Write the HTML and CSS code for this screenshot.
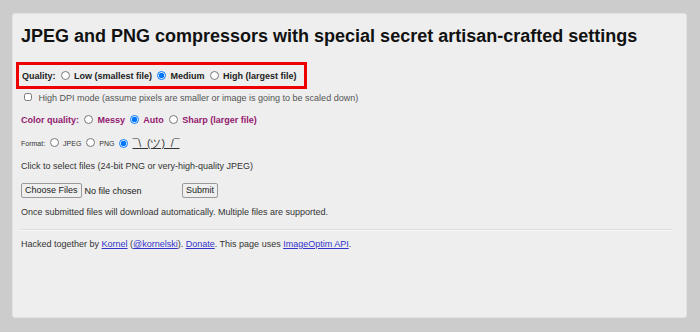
FILE: index.html
```html
<!DOCTYPE html>
<html>
<head>
  <title>JPEG and PNG compressors</title>
  <link rel="stylesheet" href="styles.css">
</head>
<body>
  <div class="page">
    <h1>JPEG and PNG compressors with special secret artisan-crafted settings</h1>

    <form class="upload">
      <div class="quality">
        <strong>Quality:</strong>
        <label><input type="radio" name="quality"> Low (smallest file)</label>
        <label><input type="radio" name="quality" checked> Medium</label>
        <label><input type="radio" name="quality"> High (largest file)</label>
      </div>

      <div class="row dpi">
        <label><input type="checkbox"> High DPI mode (assume pixels are smaller or image is going to be scaled down)</label>
      </div>

      <div class="row colors">
        <span>Color quality:</span>
        <label><input type="radio" name="colors"> Messy</label>
        <label><input type="radio" name="colors" checked> Auto</label>
        <label><input type="radio" name="colors"> Sharp (larger file)</label>
      </div>

      <div class="row format">
        <span>Format:</span>
        <label><input type="radio" name="format"> JPEG</label>
        <label><input type="radio" name="format"> PNG</label>
        <label><input type="radio" name="format" checked> <abbr>¯\_(ツ)_/¯</abbr></label>
      </div>

      <div class="row">Click to select files (24-bit PNG or very-high-quality JPEG)</div>

      <div class="row files">
        <input type="file" class="file" multiple>
        <input type="submit" class="submit" value="Submit">
      </div>

      <div class="row last">Once submitted files will download automatically. Multiple files are supported.</div>
    </form>

    <hr>

    <p class="footer">Hacked together by <a href="#">Kornel</a> (<a href="#">@kornelski</a>). <a href="#">Donate</a>. This page uses <a href="#">ImageOptim API</a>.</p>
  </div>
</body>
</html>
```

FILE: styles.css
```css
body {
  margin: 0;
  padding: 13px 13px 14px 12px;
  background-color: #ccc;
  font-family: "Liberation Sans", Arial, sans-serif;
  font-size: 9px;
  color: #333;
}

.page {
  height: 305px;
  box-sizing: border-box;
  padding: 10px 7px 0 8px;
  background-color: #eee;
  border: 1px solid #e2e2e2;
  border-radius: 3px;
}

h1 {
  margin: 0;
  font-size: 18px;
  line-height: 24px;
  color: #111;
}

.upload {
  margin-top: 14px;
}

.quality {
  margin-left: -5px;
  width: 282px;
  height: 21px;
  padding-left: 3px;
  border: 3px solid #e00;
  display: flex;
  align-items: center;
  font-weight: bold;
  color: #222;
  white-space: nowrap;
}

.quality label,
.colors label,
.format label {
  margin-left: 3px;
}

input[type="radio"] {
  width: 9px;
  height: 9px;
  margin: 0 2px 0 2px;
  vertical-align: -1px;
}

input[type="checkbox"] {
  width: 8px;
  height: 8px;
  margin: 0 4px 0 3px;
  vertical-align: 0;
}

.row {
  height: 23px;
  line-height: 23px;
}

.dpi {
  height: 18px;
  line-height: 18px;
  color: #555;
}

.colors {
  margin-top: 2px;
  display: flex;
  align-items: center;
  font-weight: bold;
  color: #93186f;
}

.format {
  display: flex;
  align-items: center;
  font-size: 7px;
}

.format abbr {
  font-size: 10.5px;
  text-decoration: underline;
}

.files {
  height: 24px;
  display: flex;
  align-items: center;
}

.file {
  width: 161px;
  font-family: inherit;
  font-size: 9px;
  color: #222;
}

.file::file-selector-button {
  font-family: inherit;
  font-size: 9px;
  height: 15px;
  padding: 0 3px;
  margin-right: 3px;
  border: 1px solid #999;
  border-radius: 2px;
  background-color: #efefef;
  color: #222;
}

.submit {
  height: 15px;
  padding: 0 3px;
  font-family: inherit;
  font-size: 9px;
  border: 1px solid #999;
  border-radius: 2px;
  background-color: #efefef;
  color: #222;
}

.last {
  height: 21px;
  line-height: 21px;
}

hr {
  margin: 6px 6px 0 0;
  border: 0;
  border-top: 1px solid #ddd;
  border-bottom: 1px solid #f8f8f8;
}

.footer {
  margin: 6px 0 0;
  line-height: 14px;
}

.footer a {
  color: #33c;
}
```
